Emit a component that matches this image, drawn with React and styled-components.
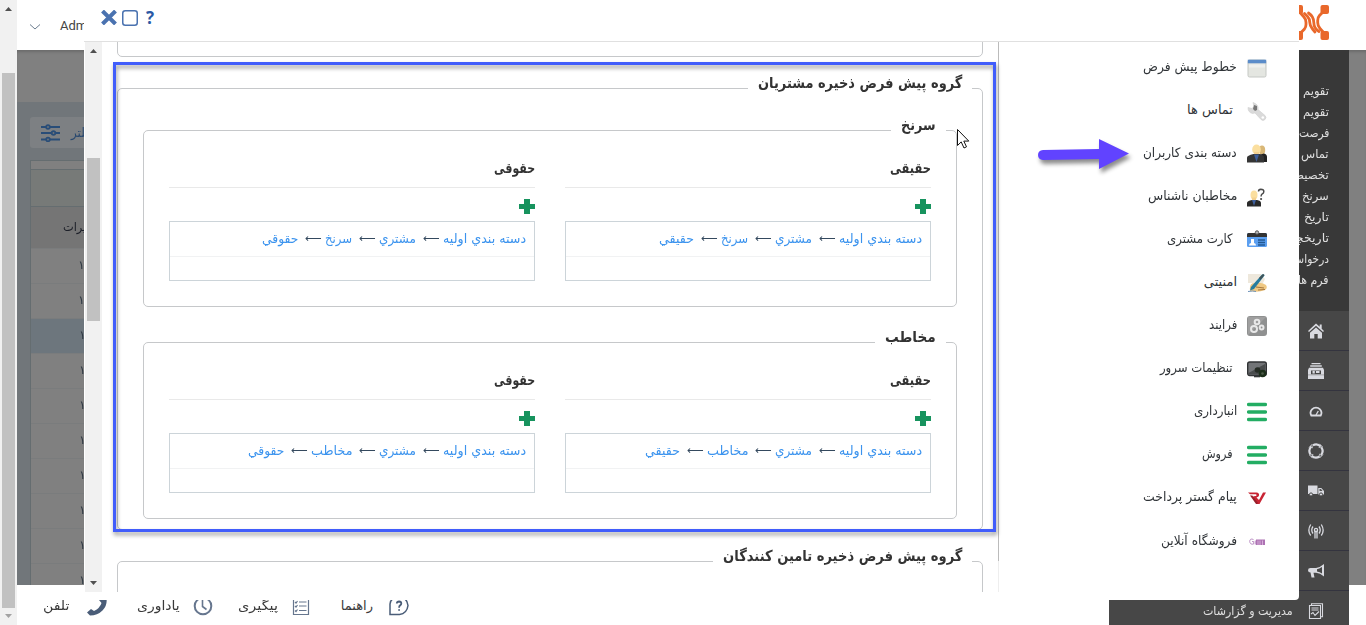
import React, { useLayoutEffect, useRef, useState } from 'react';
import styled, { createGlobalStyle } from 'styled-components';

const Global = createGlobalStyle`
  * { box-sizing: border-box; }
  body { margin: 0; background: #fff; overflow: hidden; }
`;

/* ---------- shared text ---------- */
const FitBox = styled.span`
  display: inline-flex;
  direction: rtl;
  flex: none;
  white-space: nowrap;
`;
const FitInner = styled.span`
  display: block;
  flex: none;
  transform-origin: right center;
`;
function Fit({ w, children }) {
  const ref = useRef(null);
  const [scale, setScale] = useState(1);
  useLayoutEffect(() => {
    const natural = ref.current.offsetWidth;
    if (natural) setScale(w / natural);
  }, [w]);
  return (
    <FitBox style={{ width: w }}>
      <FitInner ref={ref} style={{ transform: `scaleX(${scale})` }}>{children}</FitInner>
    </FitBox>
  );
}

/* ---------- page frame ---------- */
const Page = styled.div`
  position: relative;
  display: flex;
  width: 1366px;
  height: 625px;
  overflow: hidden;
  font-family: "DejaVu Sans", sans-serif;
  font-size: 13px;
  color: #333;
`;
const Track = styled.div`
  flex: none;
  display: flex;
  flex-direction: column;
  align-items: center;
  width: 17px;
  height: ${p => p.$h}px;
  background: #f1f1f1;
`;
const Thumb = styled.div`
  width: 13px;
  height: ${p => p.$h}px;
  margin-top: ${p => p.$top}px;
  margin-bottom: auto;
  background: #c1c1c1;
`;
const Tri = styled.svg`
  display: block;
  flex: none;
  width: 17px;
  height: 17px;
  fill: ${p => p.$c || '#505050'};
`;
const Main = styled.div`
  flex: 1;
  display: flex;
  flex-direction: column;
`;
const Top = styled.header`
  flex: none;
  height: 50px;
  display: flex;
  align-items: center;
  justify-content: space-between;
  padding: 0 20px 0 13px;
`;
const User = styled.div`
  display: flex;
  align-items: center;
  gap: 20px;
  font: 13px Roboto, sans-serif;
  color: #444;
  svg { margin-top: 3px; }
`;
const LogoWrap = styled.div`
  width: 40px;
  height: 36px;
  margin: -5px 17px 0 0;
`;
const Body = styled.div`
  flex: none;
  height: 535px;
  display: flex;
  justify-content: space-between;
  background: #808080;
  box-shadow: inset 0 3px 3px -1px #6b6b6b;
`;
const Grid = styled.div`
  width: 300px;
  height: 483px;
  margin-top: 52px;
  padding: 15px 0 0 13px;
  background: #71767a;
  overflow: hidden;
`;
const Filter = styled.div`
  display: flex;
  align-items: center;
  gap: 11px;
  height: 31px;
  padding-left: 11px;
  border-radius: 3px;
  background: #7d8083;
  color: #29486f;
`;
const Table = styled.div`
  margin-top: 12px;
  border: 1px solid #656d70;
  background: #808080;
`;
const Cell = styled.div`
  height: ${p => p.$h}px;
  padding-left: ${p => p.$pl || 0}px;
  padding-bottom: 2px;
  display: flex;
  align-items: center;
  background: ${p => p.$bg || '#808080'};
  border-bottom: 1px solid ${p => p.$line || '#7a7c7d'};
  color: ${p => p.$c || '#303a44'};
  font-size: 12px;
`;
const Nav = styled.nav`
  width: 240px;
  height: 575px;
  margin-right: 17px;
  background: #474747;
  direction: rtl;
  color: #e0e0e0;
`;
const SubMenu = styled.div`
  height: 261px;
  padding: 31px 20px 0 0;
  background: #383838;
`;
const SubItem = styled.div`
  height: 21px;
  line-height: 21px;
  font-size: 12px;
  white-space: nowrap;
`;
const NavRow = styled.div`
  height: 40px;
  display: flex;
  align-items: center;
  gap: 15px;
  padding-right: 25px;
  border-bottom: 1px solid #34343f;
  font-size: 12px;
`;
const NavIcon = styled.svg`
  width: 16px;
  height: 16px;
  flex: none;
`;
const Footer = styled.footer`
  height: 40px;
  display: flex;
  align-items: center;
  padding: 0 0 0 26px;
  font-size: 13px;
`;
const Tool = styled.div`
  display: flex;
  align-items: center;
  gap: ${p => p.$gap}px;
  margin-right: ${p => p.$mr}px;
  color: #3a3a3a;
  svg { display: block; margin-top: 1px; color: #4a5d78; }
`;

/* ---------- dialog ---------- */
const Dialog = styled.section`
  position: absolute;
  left: 84px;
  top: 0;
  width: 1215px;
  height: 600px;
  background: #fff;
  border-radius: 0 0 4px 0;
  overflow: hidden;
`;
const DialogBar = styled.div`
  height: 42px;
  display: flex;
  align-items: flex-start;
  gap: 5px;
  padding: 10px 0 0 17px;
  border-bottom: 1px solid #e0e0e0;
  svg { display: block; }
`;
const Help = styled.span`
  margin: -4px 0 0 3px;
  font: bold 17px "Open Sans", sans-serif;
  line-height: 23px;
  color: #2a59a5;
`;
const DialogBody = styled.div`
  display: flex;
  height: 550px;
  padding-left: 1px;
  overflow: hidden;
`;
const Content = styled.div`
  width: 897px;
  height: 550px;
  padding: 0 16px 0 15px;
  overflow: hidden;
  background: linear-gradient(#bbb, #bbb) no-repeat right top / 1px 519px,
    linear-gradient(#eee, #eee) no-repeat right top / 1px 550px;
  direction: rtl;
`;
const Group = styled.div`
  width: ${p => (p.$inner ? 814 : 866)}px;
  height: ${p => p.$h}px;
  margin-top: ${p => p.$mt || 0}px;
  padding: 0 25px;
  border: 1px solid #c6c8ca;
  border-radius: 5px;
`;
const Legend = styled.div`
  display: flex;
  align-items: center;
  width: fit-content;
  height: 24px;
  margin: -18px -15px 0 0;
  padding: 0 10px;
  background: #fff;
  font-weight: bold;
  font-size: 15px;
`;
const Columns = styled.div`
  display: flex;
  gap: 30px;
`;
const Column = styled.div`
  width: 366px;
`;
const Heading = styled.div`
  display: flex;
  align-items: center;
  height: 39px;
  margin-top: 12px;
  border-bottom: 1px solid #e9e9e9;
  font-weight: bold;
  font-size: 14.5px;
`;
const Plus = styled.svg`
  display: block;
  width: 16px;
  height: 15px;
  margin: 11px 0 7px;
  fill: #17935e;
`;
const List = styled.div`
  height: 60px;
  border: 1px solid #ccd4d9;
`;
const Path = styled.div`
  display: flex;
  align-items: center;
  height: 35px;
  padding: 0 8px 2px 0;
  border-bottom: 1px solid #f1f2f3;
  color: #3b93ee;
`;
const Arrow = styled.span`
  display: flex;
  margin: 0 3px 0 7px;
  font-size: 11px;
  color: #34495e;
`;
const Side = styled.aside`
  width: 300px;
  padding: 4px 32px 0 0;
  direction: rtl;
`;
const SideItem = styled.div`
  display: flex;
  align-items: center;
  height: 43.1px;
  gap: ${p => (p.$in ? 14 : 10)}px;
  color: #2f3337;
  svg { flex: none; display: block; }
  > span { margin-bottom: 3px; }
`;

/* ---------- annotations floating over the page ---------- */
const Frame = styled.div`
  position: absolute;
  left: 113px;
  top: 62px;
  width: 883px;
  height: 470px;
  border: 3px solid #415dfb;
  filter: drop-shadow(1px 3px 2px rgba(0, 0, 0, 0.4));
`;
const Pointer = styled.svg`
  position: absolute;
  left: ${p => p.$x}px;
  top: ${p => p.$y}px;
  overflow: visible;
  ${p => p.$shadow && 'filter: drop-shadow(2px 4px 2px rgba(0,0,0,.45));'}
`;

/* ---------- icons ---------- */
const Logo = () => (
  <svg width="40" height="36" viewBox="0 0 40 36" fill="none" stroke="#e9682b" strokeWidth="2.800" strokeLinecap="round">
    <g fill="#e9682b" stroke="none">
      <rect x="5" y="0" width="9" height="9" rx="2" /><rect x="31.500" y="0" width="8.500" height="9" rx="2" />
      <rect x="5" y="26" width="9" height="9" rx="2" /><rect x="31.500" y="26" width="8.500" height="9" rx="2" />
    </g>
    <path d="M33.500 7.500L30.500 10.500Q28.700 12.500 28.700 15.500V17.500Q28.700 21 31 23.500L35 28" />
    <path d="M12 27.500L15.500 24Q17 22 17 19.500V17.500Q17 14 14.500 11.500L11 7.500" />
    <path d="M15.500 8.500L18.500 11.500Q20.800 14 20.800 17.500T23.500 24L26 27" />
    <path d="M19.500 8Q24.800 11.500 24.800 17.500T30 26.500" />
  </svg>
);

const sideIcons = {
  window: <><rect x="1" y="2" width="18" height="17" rx="1.500" fill="#e4e6e1" stroke="#c5c8c4" /><path d="M.8 1.700h18.400v3.600H.8z" fill="#5b8cc9" /><path d="M2 6.500h16v3H2z" fill="#eff0ee" /></>,
  wrench: <><path d="M6 1.500l1 4-2 2-4-1q0 5 4.500 6l2.500-.5 6 6.500q2 2 4 0t0-4l-7-6q1-5-5-7z" fill="#dadada" stroke="#cfcfcf" strokeWidth=".6" /><circle cx="15.800" cy="16.500" r="1.300" fill="#fff" /><path d="M7 4l3 1v4L8 10 6 8z" fill="#777" /></>,
  users: <><ellipse cx="15" cy="6" rx="3.200" ry="4.500" fill="#d9b777" /><path d="M12 11l5-1.500q3 .5 3 3.500v5h-8z" fill="#222" /><ellipse cx="9.500" cy="5.500" rx="4.300" ry="5" fill="#fbdf9f" /><path d="M7 8h5v4H7z" fill="#f4d190" /><path d="M0 18.500v-5q0-2 6.500-3.500h6q4.500 1 4.500 3.500v5z" fill="#353535" /><path d="M7 10.500h5l-2.500 7.500z" fill="#3e5f9c" /></>,
  unknown: <><ellipse cx="7" cy="8" rx="3.500" ry="4.500" fill="#fbdf9f" /><path d="M5 10.500h4v3H5z" fill="#f4d190" /><path d="M0 19.500v-3.500q0-2 5-3h5q4 .5 4 3v3.500z" fill="#292929" /><path d="M5 13h4l-2 6z" fill="#3e5f9c" /><path d="M11.500 4.500q0-2 2.300-2.200 3.200 0 3 2.400 0 1.500-1.800 2.400-.9.600-.9 2.300" fill="none" stroke="#4a4a4a" strokeWidth="1.500" /><circle cx="14.100" cy="12" r="1.100" fill="#4a4a4a" /></>,
  card: <><rect x="0" y="3" width="20" height="14" rx="1.500" fill="#5b9ff0" /><path d="M0 7V4.500Q0 3 1.500 3h17Q20 3 20 4.500V7z" fill="#333" /><circle cx="10" cy="2.500" r="1.700" fill="#bbb" stroke="#555" /><path d="M2 15.500q0-2.500 2-2.500V9h3v4q2 0 2 2.500z" fill="#fff" /><path d="M11 10h7M11 12.500h7M11 15h7" stroke="#235992" strokeWidth="1.300" /></>,
  sign: <><path d="M1 1h13l4 5-2 4H1z" fill="#eee8dc" /><path d="M3 17Q2 10 8 10q7-1 11 2 2 3-1 5-7 3-15 1z" fill="#efc883" /><path d="M9 14l8 1M11 17l7-.5" stroke="#a7773d" /><path d="M4 14L15 1.500q2-1 2.500 1L7 16l-4 1.500z" fill="#267c9f" /><path d="M12 5l4-4 1.500 1-4 5z" fill="#425357" /><path d="M1 18.500q5-1 8 0" stroke="#6e93ba" fill="none" /></>,
  process: <><rect width="20" height="20" rx="3" fill="#8f9090" /><path d="M1 1h18L1 19z" fill="#aaa" opacity=".6" /><g fill="none" stroke="#e8e8e8" strokeWidth="2"><circle cx="7" cy="13" r="3" /><circle cx="10" cy="6" r="2.300" /><circle cx="14.600" cy="11.500" r="1.900" /></g></>,
  server: <><rect x=".7" y="3" width="18.600" height="13.500" rx="2" fill="#727477" stroke="#303234" strokeWidth="1.400" /><path d="M1.500 14L18 5v10.500H1.500z" fill="#484b4c" /><path d="M7 16.500h6v1.800H7z" fill="#343638" /><circle cx="10.500" cy="11" r="2.800" fill="#252b24" /><circle cx="15.500" cy="14.500" r="3.800" fill="#1c2e1a" /><circle cx="15.500" cy="14.500" r="1.300" fill="#4e5c49" /></>,
  bars: <path d="M1.700 2.500h16.600M1.700 10h16.600M1.700 17.500h16.600" stroke="#23ad63" strokeWidth="3.600" strokeLinecap="round" />,
  pay: <><path d="M1 4.500h8.500q3 .3 2.500 3-.3 1.700-2.500 2L12 12l4-7.500h3L12.500 16H9.800L5.500 9.800l1-1.600 2.400-.2q.8-.3.7-1-.2-.7-1-.7H3z" fill="#c92534" /><path d="M3 7.500h2.300L11 15l-1 1H9z" fill="#98202c" /></>,
  shop: <><path d="M6.500 7.500Q3 6 2.700 9.300 3 13 6.700 12V9.500H5M8.300 8.500v4" fill="none" stroke="#b687bf" strokeWidth=".9" /><rect x="9" y="7.500" width="9" height="5.500" fill="#ad72b3" /><path d="M11 8.500v4.500M13 8.500v4.500M15.500 8.500v4.500" stroke="#e8c8e9" strokeWidth=".7" /></>,
};

const navIcons = [
  <path key="a" d="M8 .5L0 8l1 1L8 2.800 15 9l1-1-2.300-2.200V1.500h-2v2.300zM8 4.500L2 9.800V15.500h4.300v-4.500h3.400v4.500H14V9.800z" fill="#d9dae0" />,
  <g key="b" fill="#d9dae0"><path d="M3.500 0h9v1.200h-9zM2.200 2.300h11.600v1.400H2.200zM1 4.800h14L16 7v9H0V7zM3 7.500v3.700h10V7.500z" fillRule="evenodd" /><path d="M4.500 7.800h2.300v2.700H4.500zM8 8h3.500v2H8z" /><path d="M0 11.900h16" stroke="#777" strokeWidth=".5" /></g>,
  <g key="c" fill="none" stroke="#d9dae0" strokeWidth="1.800"><path d="M8 12.500H3.300Q1.400 9 4 6.300q1.700-1.600 4-1.600t4 1.600q2.600 2.700.7 6.200H8" /><path d="M8 12l2.300-4" strokeWidth="1.300" /></g>,
  <g key="d" fill="none" stroke="#d9dae0" strokeWidth="2.200"><circle cx="8" cy="8" r="6.500" strokeDasharray="8.200 2" transform="rotate(-35 8 8)" /><path d="M11.500.8l3 3.200-3.800.5M15 11.500l-2.800 3-.7-3.700M4.500 15.200l-3-3.200 3.800-.5M1 4.500l2.800-3 .7 3.700" strokeWidth=".8" /></g>,
  <g key="e" fill="#d9dae0"><path d="M0 2.500h9.500v8.500H0zM10.300 5h3L16 8v3.500h-5.700z" /><path d="M11.500 6v2h3L13 6z" fill="#555" /><circle cx="3" cy="11.500" r="1.600" stroke="#474747" /><circle cx="13" cy="11.500" r="1.600" stroke="#474747" /></g>,
  <g key="f" fill="none" stroke="#d9dae0" strokeWidth="1.300"><circle cx="8" cy="7" r="1.600" /><path d="M5 10.500Q2.500 7 5 3.500M11 10.500q2.500-3.500 0-7M2.700 12.500Q-1 7.500 2.700 1.500M13.300 12.500Q17 7.500 13.300 1.500M7 15.500V8.500h2v7" /></g>,
  <path key="g" d="M16 1v12.500q-4-3.500-8-3.700H5.500l1 4.700H3.500L2.500 9.500Q0 9.500 0 7.300T2.500 5H8q4-.5 8-4zM14 4Q11 6 9 6.300v2.100q3 .3 5 2z" fill="#d9dae0" fillRule="evenodd" />,
  <g key="h" fill="none" stroke="#d9dae0" strokeWidth="1.100"><path d="M3.500 2V.7h11v13h-1.500M1.500 2.500h11v13h-11z" /><path d="M3.500 5h7M3.500 7h7M3 11l2-1.500 2 3 4-4" /></g>,
];

/* ---------- data ---------- */
const sideItems = [
  ['خطوط پیش فرض', 94, 'window'], ['تماس ها', 46, 'wrench', 1], ['دسته بندی کاربران', 94, 'users'],
  ['مخاطبان ناشناس', 89, 'unknown'], ['کارت مشتری', 66, 'card', 1], ['امنیتی', 33, 'sign'],
  ['فرایند', 28, 'process'], ['تنظیمات سرور', 73, 'server', 1], ['انبارداری', 43, 'bars'],
  ['فروش', 31, 'bars', 1], ['پیام گستر پرداخت', 94, 'pay'], ['فروشگاه آنلاین', 76, 'shop'],
];
const subItems = [
  ['تقویم', 26], ['تقویم', 26], ['فرصت', 30], ['تماس', 28], ['تخصیص', 39],
  ['سرنخ', 27], ['تاریخ', 25], ['تاریخچه', 40], ['درخواست', 44], ['فرم ها', 31],
];
const groups = [
  { title: 'سرنخ', w: 35, link: 27, mt: 35 },
  { title: 'مخاطب', w: 51, link: 41, mt: 35 },
];
const kinds = [['حقیقی', 41, 'حقيقي', 35], ['حقوقی', 41, 'حقوقي', 36]];

function Crumbs({ items }) {
  return (
    <Path>
      {items.map(([t, w], i) => (
        <React.Fragment key={i}>
          {i > 0 && <Arrow><Fit w={17}>⟵</Fit></Arrow>}
          <Fit w={w}>{t}</Fit>
        </React.Fragment>
      ))}
    </Path>
  );
}

function CategoryGroup({ g }) {
  return (
    <Group $inner $h={177} $mt={g.mt}>
      <Legend><Fit w={g.w}>{g.title}</Fit></Legend>
      <Columns>
        {kinds.map(([head, hw, leaf, lw]) => (
          <Column key={head}>
            <Heading><Fit w={hw}>{head}</Fit></Heading>
            <Plus viewBox="0 0 16 15"><path d="M5 0h6v5h5v5h-5v5H5v-5H0V5h5z" /></Plus>
            <List>
              <Crumbs items={[['دسته بندي اوليه', 83], ['مشتري', 37], [g.title, g.link], [leaf, lw]]} />
            </List>
          </Column>
        ))}
      </Columns>
    </Group>
  );
}

const Up = ({ c }) => <Tri $c={c} viewBox="0 0 17 17"><path d="M5 11h7L8.500 7z" /></Tri>;
const Down = ({ c }) => <Tri $c={c} viewBox="0 0 17 17"><path d="M5 6h7l-3.500 4z" /></Tri>;

export default function App() {
  return (
    <Page>
      <Global />
      <Track $h={625}><Up /><Thumb $h={535} $top={56} /><Down c="#a3a3a3" /></Track>
      <Main>
        <Top>
          <User>
            <svg width="10" height="6" fill="none" stroke="#6c7d8f"><path d="M0 .5l5 4.500 5-4.500" /></svg>
            Admin
          </User>
          <LogoWrap><Logo /></LogoWrap>
        </Top>
        <Body>
          <Grid>
            <Filter>
              <svg width="19" height="18" fill="#71767a" stroke="#294d78" strokeWidth="1.800">
                <path d="M0 3h19M0 9h19M0 15.500h19" /><circle cx="7" cy="3" r="1.800" /><circle cx="12.500" cy="9" r="1.800" /><circle cx="7" cy="15.500" r="1.800" />
              </svg>
              <Fit w={24}>فیلتر</Fit>
            </Filter>
            <Table>
              <Cell $h={9} $line="#656d70" />
              <Cell $h={37} $bg="#777a78" $line="#656d70" />
              <Cell $h={42} $bg="#757575" $pl={32} $c="#1c1f28"><Fit w={36}>تغییرات</Fit></Cell>
              {Array.from({ length: 10 }, (_, i) => (
                <Cell key={i} $h={35} $pl={i < 2 ? 47 : 48} $bg={i === 2 ? '#6d767d' : undefined}><Fit w={38}>۱۴۰۱/۰</Fit></Cell>
              ))}
            </Table>
          </Grid>
          <Nav>
            <SubMenu>{subItems.map(([t, w], i) => <SubItem key={i}><Fit w={w}>{t}</Fit></SubItem>)}</SubMenu>
            {navIcons.map((icon, i) => (
              <NavRow key={i}>
                <NavIcon viewBox="0 0 16 16">{icon}</NavIcon>
                {i === 7 && <Fit w={90}>مدیریت و گزارشات</Fit>}
              </NavRow>
            ))}
          </Nav>
        </Body>
        <Footer>
          <Tool $gap={18} $mr={30}>
            <Fit w={26}>تلفن</Fit>
            <svg width="20" height="20" viewBox="0 0 20 20"><path d="M16 1l3.500 1.500q1 7-4 12T3 19.500L0 16.500l4-3.500 3 2q6-3 7.500-8L12 4z" fill="currentColor" /></svg>
          </Tool>
          <Tool $gap={13} $mr={25}>
            <Fit w={43}>یاداوری</Fit>
            <svg width="20" height="20" viewBox="0 0 20 20" fill="none" stroke="#66768e" strokeWidth="2"><circle cx="10" cy="10" r="8.300" /><path d="M9.500 4v6.500l4 3" strokeWidth="1.600" /></svg>
          </Tool>
          <Tool $gap={14} $mr={31}>
            <Fit w={40}>پیگیری</Fit>
            <svg width="18" height="20" viewBox="0 0 18 20" fill="none" stroke="#66768e" strokeWidth="1.200"><path d="M1.500 2h15v16.500h-15zM7 6h7.500M7 10h7.500M7 14.500h7.500M3 6l1 1 1.500-2M3 10l1 1 1.500-2M3 14.500l1 1 1.500-2" /></svg>
          </Tool>
          <Tool $gap={16} $mr={0}>
            <Fit w={32}>راهنما</Fit>
            <svg width="20" height="20" viewBox="0 0 20 20" fill="none" stroke="currentColor" strokeWidth="1.500"><path d="M1 18.500V8q1-7 9-7t9 8.500q-1 8-8.500 9z" /><path d="M7.800 7.500q.2-2 2.300-2 2.200.1 2.200 2 0 1.200-1.200 1.900-1 .6-1 2.300M10.100 13.300v1.500" strokeWidth="1.800" /></svg>
          </Tool>
        </Footer>
      </Main>

      <Dialog>
        <DialogBar>
          <svg width="16" height="15" viewBox="0 0 16 15"><path d="M1.500 1l13 13M14.500 1l-13 13" stroke="#4a72b0" strokeWidth="4" /></svg>
          <svg width="16" height="16"><rect x=".75" y=".75" width="14.500" height="14.500" rx="2.500" fill="none" stroke="#4a72b0" strokeWidth="1.500" /></svg>
          <Help>?</Help>
        </DialogBar>
        <DialogBody>
          <Track $h={550}><Up /><Thumb $h={163} $top={99} /><Down /></Track>
          <Content>
            <Group $h={35} $mt={-20} />
            <Group $h={442} $mt={31}>
              <Legend><Fit w={204}>گروه پیش فرض ذخیره مشتریان</Fit></Legend>
              {groups.map(g => <CategoryGroup key={g.title} g={g} />)}
            </Group>
            <Group $h={60} $mt={31}>
              <Legend><Fit w={239}>گروه پیش فرض ذخیره تامین کنندگان</Fit></Legend>
            </Group>
          </Content>
          <Side>
            {sideItems.map(([t, w, icon, inset]) => (
              <SideItem key={t} $in={inset}>
                <svg width="20" height="20" viewBox="0 0 20 20">{sideIcons[icon]}</svg>
                <Fit w={w}>{t}</Fit>
              </SideItem>
            ))}
          </Side>
        </DialogBody>
      </Dialog>

      <Frame />
      <Pointer $x={1038} $y={139} $shadow width="91" height="30">
        <path d="M5 11l56-1V0l30 14.500L61 30V20L5 21q-5-.5-5-5t5-5z" fill="#6143ff" />
      </Pointer>
      <Pointer $x={957} $y={129} width="13" height="20">
        <path d="M.5.500v16l3.700-3.600L7 19l2.500-1.200-2.700-5.700h5z" fill="#fff" stroke="#111" />
      </Pointer>
    </Page>
  );
}
